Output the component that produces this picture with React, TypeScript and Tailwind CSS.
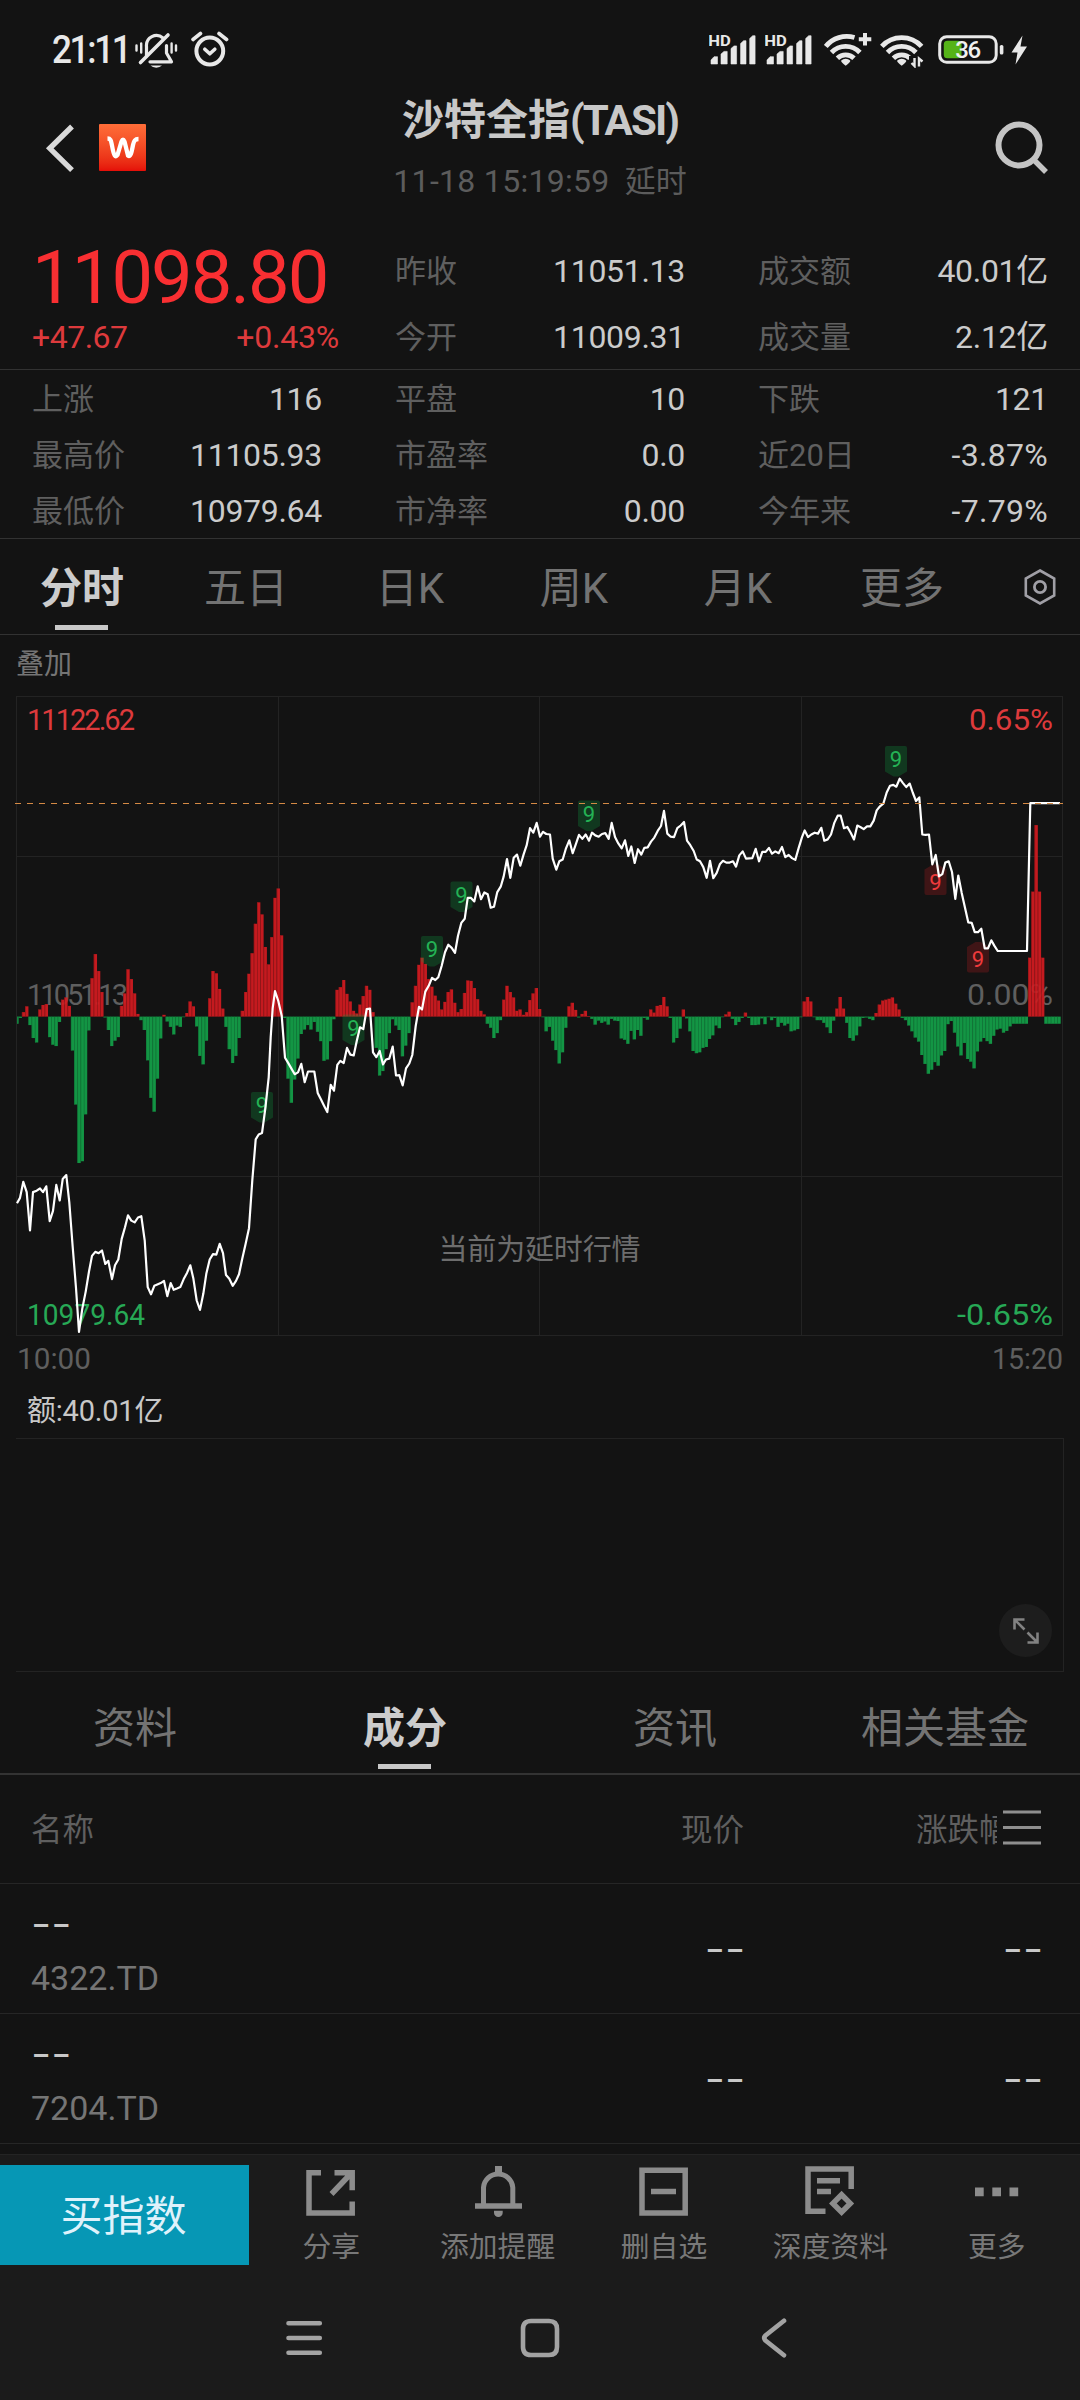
import React from "react";

const FONT = "font-['Roboto','Noto_Sans_CJK_SC',sans-serif]";

/* ---------- status bar ---------- */

function MutedBell() {
  return (
    <svg width="44" height="38" viewBox="0 0 44 38" fill="none" stroke="#e8e8e8" strokeWidth="3.2" strokeLinecap="round">
      <path d="M11.5 24V14.5a10 10 0 0 1 16.5-8.5" />
      <path d="M31.5 13.5V21l5 8.8H15" strokeLinejoin="round" />
      <path d="M5.5 30.5L33 3" strokeWidth="3.6" />
      <path d="M1.5 13.5v5M6.2 11.5v9M36.6 11.5v9M41 13.5v5" strokeWidth="2.4" />
      <path d="M15.5 33.5h11.5a7 5 0 0 1-11.5 0z" fill="#e8e8e8" stroke="none" />
    </svg>
  );
}

function AlarmClock() {
  return (
    <svg width="38" height="38" viewBox="0 0 38 38" fill="none" stroke="#e8e8e8" strokeLinecap="round">
      <circle cx="18.8" cy="20" r="13.4" strokeWidth="4" />
      <path d="M13.8 18.2l5 4.6 5-4.6" strokeWidth="3.6" strokeLinejoin="round" />
      <path d="M2 8.5L9.5 2.5M35.6 8.5L28 2.5" strokeWidth="3.6" />
    </svg>
  );
}

function Signal() {
  return (
    <svg width="47" height="36" viewBox="0 0 47 36" fill="#e8e8e8">
      <text x="-0.8" y="14" fontSize="14.5" fontWeight="700" textLength="22.5" lengthAdjust="spacingAndGlyphs">HD</text>
      <path d="M2 32v-4l3-3.3h3.5V32zM12 32V22l3-2.6h3.2V32zM22 32V16.500l3-2.600h2.600V32zM31.600 32V11.500l3-2.800h2.400V32zM40.700 32V6.500l3-2.800h2.400V32z" stroke="#e8e8e8" strokeWidth=".6" strokeLinejoin="round" />
    </svg>
  );
}

function Wifi({ plus }: { plus?: boolean }) {
  return (
    <svg width={plus ? 48 : 44} height="36" viewBox={plus ? "0 0 48 36" : "0 0 44 36"} fill="none" stroke="#e8e8e8" strokeWidth="4.8">
      <path d={plus ? "M1.800 14.400A27 27 0 0 1 30.500 5.500" : "M1.800 14.400A27 27 0 0 1 41.600 14.400"} />
      <path d="M7.500 20.500A19.500 19.500 0 0 1 35.900 20.500" />
      <path d="M13.400 26.200A11.800 11.800 0 0 1 30 26.200" />
      <path d="M17.200 28.500a6.500 6.500 0 0 1 9 0q.6 1.500-4.500 5.300q-5.100-3.800-4.500-5.300z" fill="#e8e8e8" stroke="none" />
      {plus ? (
        <path d="M41 1v12.500M34.800 7.200h12.500" strokeWidth="4" />
      ) : (
        <>
          <path d="M29 36V24h15v12z" fill="#131313" stroke="none" />
          <path d="M34.500 26v8l-3-3M39 34.500v-8l3.500 3" strokeWidth="2.400" />
        </>
      )}
    </svg>
  );
}

function Battery() {
  return (
    <svg width="66" height="36" viewBox="0 0 66 36">
      <rect x="1.700" y="4.700" width="56.500" height="25.600" rx="7" fill="none" stroke="#e8e8e8" strokeWidth="3" />
      <rect x="5.800" y="8.800" width="17.700" height="17.500" rx="3.500" fill="#55b318" />
      <rect x="61.800" y="13" width="3.600" height="9.500" rx="1.600" fill="#e8e8e8" />
      <text x="17.200" y="26.200" fontSize="24" fontWeight="500" fill="#f0f0f0" textLength="26">36</text>
    </svg>
  );
}

function StatusBar() {
  return (
    <div className="flex h-[98px] items-center pt-[2px] text-[#e8e8e8]">
      <div className="ml-[52px] w-[83px]">
        <div className="inline-block origin-left scale-x-[0.9] text-[39px] leading-none font-medium tracking-[-2.600px] whitespace-nowrap">21:11</div>
      </div>
      <div className="mt-[1px]"><MutedBell /></div>
      <div className="ml-[12px]"><AlarmClock /></div>
      <div className="ml-auto flex pr-[52px]">
        <Signal />
        <div className="ml-[9px]"><Signal /></div>
        <div className="ml-[12px]"><Wifi plus /></div>
        <div className="ml-[8px]"><Wifi /></div>
        <div className="ml-[14px]"><Battery /></div>
        <svg className="ml-[7px]" width="17" height="36" viewBox="0 0 17 36">
          <path d="M11.500 3.500L.500 20.500h6l-2 12L16 14.500H9.500z" fill="#e8e8e8" />
        </svg>
      </div>
    </div>
  );
}

/* ---------- header ---------- */

function Header() {
  return (
    <div className="flex h-[139px] items-start">
      <div className="flex w-[200px] pt-[26px] pl-[45px]">
        <svg width="32" height="50" viewBox="0 0 32 50">
          <path d="M27 2.500L4.800 24.300L27 46.200" fill="none" stroke="#d9d9d9" strokeWidth="5.400" />
        </svg>
        <div className="ml-[22px] flex h-[47px] w-[47px] items-center justify-center rounded-[1px] bg-linear-to-b from-[#ff6d38] to-[#e50d08]">
          <svg width="34" height="24" viewBox="0 0 34 24">
            <path d="M1.500 2.500C5 2.500 5 5 6 9.500C8 21 9.500 21.500 11.500 19L15.500 5.500Q17 2 18.500 5.500L22 19.500C24.500 21.500 25.500 17 27 9C28 4.500 29 3 32.500 3" fill="none" stroke="#fff" strokeWidth="4.300" />
          </svg>
        </div>
      </div>
      <div className="flex flex-1 flex-col items-center pt-[2px]">
        <div className="text-[42px] leading-[42px] font-bold whitespace-nowrap text-[#c8c8c8]">
          沙特全指<span className="tracking-[-1.900px]">(TASI)</span>
        </div>
        <div className="mt-[19px] flex h-[40px] items-center text-[32px] leading-none whitespace-nowrap text-[#5c5c5c]">
          <span className="tracking-[0.300px]">11-18 15:19:59</span>
          <span className="ml-[15px] text-[31px]">延时</span>
        </div>
      </div>
      <div className="w-[200px] pt-[22px] pl-[115px]">
        <svg width="56" height="58" viewBox="0 0 56 58" fill="none" stroke="#c4c4c4" strokeWidth="6">
          <circle cx="24" cy="25" r="20.500" />
          <path d="M38.500 39.500L51 52" strokeWidth="5.500" />
        </svg>
      </div>
    </div>
  );
}

/* ---------- quote figures ---------- */

function Stat({ label, value }: { label: string; value: string }) {
  return (
    <div className="flex items-center justify-between pt-[2px] leading-none">
      <span className="text-[31px] text-[#5f5f5f]">{label}</span>
      <span className={value.startsWith("-") ? "text-[32px] tracking-[0.300px] text-[#cbcbcb]" : "text-[32px] tracking-[-0.300px] text-[#cbcbcb]"}>{value}</span>
    </div>
  );
}

const DETAILS: [string, string][] = [
  ["上涨", "116"],
  ["平盘", "10"],
  ["下跌", "121"],
  ["最高价", "11105.93"],
  ["市盈率", "0.0"],
  ["近20日", "-3.87%"],
  ["最低价", "10979.64"],
  ["市净率", "0.00"],
  ["今年来", "-7.79%"],
];

function Quote() {
  return (
    <>
      <div className="grid h-[133px] grid-cols-3 gap-x-[73px] border-b border-[#323232] px-[32px]">
        <div className="flex flex-col">
          <div className="flex h-[80px] items-center pt-[2px] text-[74px] leading-none tracking-[-1.900px] text-[#f92f32]">11098.80</div>
          <div className="flex h-[40px] w-[307px] items-center justify-between text-[32px] leading-none text-[#dd3a3c]">
            <span className="tracking-[-0.500px]">+47.67</span>
            <span className="tracking-[-0.200px]">+0.43%</span>
          </div>
        </div>
        <div className="grid grid-rows-2">
          <Stat label="昨收" value="11051.13" />
          <Stat label="今开" value="11009.31" />
        </div>
        <div className="grid grid-rows-2">
          <Stat label="成交额" value="40.01亿" />
          <Stat label="成交量" value="2.12亿" />
        </div>
      </div>
      <div className="grid h-[169px] auto-rows-[56px] grid-cols-3 gap-x-[73px] border-b border-[#323232] px-[32px]">
        {DETAILS.map(([label, value]) => (
          <Stat key={label} label={label} value={value} />
        ))}
      </div>
    </>
  );
}

function PeriodTabs() {
  return (
    <div className="flex h-[96px] border-b border-[#323232] text-[42px] leading-[42px] text-[#737373]">
      {["分时", "五日", "日K", "周K", "月K", "更多"].map((name, i) => (
        <div key={name} className="flex w-[164px] flex-col items-center pt-[29px]">
          <span className={i === 0 ? "font-bold text-[#cccccc]" : ""}>{name}</span>
          {i === 0 && <span className="mt-[15px] -ml-[1px] h-[5px] w-[53px] bg-[#c8c8c8]" />}
        </div>
      ))}
      <div className="pt-[29px] pl-[39px]">
        <svg width="34" height="38" viewBox="0 0 34 38" fill="none" stroke="#a09fa6" strokeWidth="2.600">
          <path d="M17 2.500L31.200 10.500V27.500L17 35.500L2.800 27.500V10.500z" />
          <circle cx="17" cy="19" r="5.600" strokeWidth="2.800" />
        </svg>
      </div>
    </div>
  );
}

/* ---------- intraday chart ---------- */

/* Price trace and bars share one 3240 x 1568 plotting space. */
const KX = 1 / 3;
const KY = 1 / 2.24;
const TOP = 680;
const ZERO = 754;

const PRICE: [number, number, string][] = [
  [0, 0, "51,1172 60,1160 70,1124 80,1147 90,1233 99,1147 110,1144 120,1139 129,1147 139,1134 149,1212 159,1189 169,1131 179,1166 188,1118 199,1109 208,1170 218,1270 228,1362 237,1460 247,1408 257,1370 267,1325 276,1290 286,1281 296,1284 306,1278 316,1308 325,1301 336,1342 345,1311 355,1298 365,1252 375,1226 384,1199 394,1211 404,1215 414,1204 424,1201 434,1255 443,1360 453,1376 463,1357 472,1354 482,1351 492,1346 502,1380 512,1351 521,1366 531,1363 541,1360 551,1342 561,1328 571,1311 580,1340 590,1390 600,1411 610,1375 619,1330 629,1298 639,1286 649,1287 659,1263 669,1284 678,1333 688,1341 698,1357 708,1346 717,1331 727,1296 737,1262 747,1228 757,1121 767,1029 776,1018 786,1015 796,960 806,890 812,800 818,735 825,697 835,719 845,752 855,846 864,857 874,870 884,883 894,879 904,860 914,901 924,877 943,877 953,925 963,940 973,955 982,968 992,907 1002,920 1012,862 1021,853 1031,858 1041,824 1051,839 1061,841 1070,809"],
  [1080, 0, "0,778 10,782 20,737 30,736 39,834 49,845 59,831 69,861 78,850 88,848 98,821 108,886 118,885 128,908 138,870 148,859 157,840 167,775 177,732 186,738 196,698 206,685 216,667 226,672 235,666 245,640 255,610 265,593 275,600 285,611 294,573 304,544 314,535 323,488 333,488 343,496 353,462 363,491 373,476 383,480 392,510 402,508 412,475 422,463 431,440 441,401 451,443 461,398 471,391 481,416 491,390 500,370 510,332 520,342 530,320 540,351 549,340 559,345 570,346 578,400 589,425 598,406 608,402 618,377 628,359 638,388 647,369 657,347 667,356 677,346 687,360 696,342 706,348 716,351 726,345 736,343 746,356 755,320 765,352 775,366 785,377 795,359 805,394 814,373 824,410 834,379 844,391 853,376 863,375 873,362 883,353 893,338 903,327 912,293 922,344 932,351 942,352 952,332 962,326 972,318 981,360 991,370 1001,383 1010,402 1020,406 1030,419 1040,443 1050,405 1060,444 1070,432"],
  [2160, 0, "0,412 9,405 19,409 29,409 39,406 48,418 58,393 68,384 78,400 97,399 107,378 117,406 127,385 137,385 147,376 156,389 166,384 176,388 186,374 196,397 206,392 216,399 226,403 236,376 246,352 254,337 264,352 274,346 284,342 294,344 304,331 313,360 323,357 333,346 343,320 353,304 362,304 372,332 382,329 392,342 402,357 412,326 422,330 431,334 441,328 451,328 461,315 470,292 480,283 490,277 500,252 510,237 520,235 529,239 539,221 549,231 559,240 569,232 578,252 588,271 598,263 607,346 617,347 627,346 637,413 647,392 657,440 667,435 676,409 686,406 696,430 706,490 715,438 725,477 735,510 745,543 755,544 764,565 774,565 784,557 794,601 804,601 814,583 823,595 833,607 921,607 931,276 1020,276"],
];

const LINE = PRICE.flatMap(([dx, dy, pts]) =>
  pts.split(" ").map((p) => {
    const [x, y] = p.split(",").map(Number);
    return `${((x + dx) * KX).toFixed(1)},${(TOP + (y + dy) * KY).toFixed(1)}`;
  }),
).join(" ");

/* One value per trading minute: above ZERO is drawn red, below it green. */
const BARS = [
  770, 757, 744, 731, 773, 802, 812, 738, 728, 726, 800, 817, 820, 766, 716, 711, 730, 830, 951, 1082, 1078, 973, 785, 668, 614, 652, 699, 756, 784, 820,
  808, 800, 730, 702, 648, 670, 702, 748, 762, 784, 852, 936, 967, 893, 803, 750, 765, 777, 794, 774, 777, 754, 746, 720, 731, 776, 842, 861, 808, 713,
  652, 657, 692, 736, 777, 827, 858, 842, 802, 741, 699, 658, 612, 546, 498, 525, 598, 637, 576, 488, 467, 572, 757, 893, 947, 895, 848, 793, 783, 773,
  783, 766, 788, 809, 853, 850, 809, 760, 694, 688, 672, 703, 720, 741, 747, 727, 708, 685, 694, 744, 824, 886, 876, 827, 791, 760, 774, 784, 843, 819,
  791, 722, 685, 638, 622, 636, 670, 687, 707, 718, 738, 721, 699, 693, 723, 744, 737, 701, 673, 674, 690, 715, 741, 749, 770, 779, 802, 791, 762, 716,
  685, 699, 711, 741, 738, 750, 744, 717, 702, 690, 737, 754, 787, 777, 808, 829, 859, 834, 779, 731, 723, 739, 756, 748, 741, 753, 759, 772, 763, 768,
  765, 772, 759, 763, 764, 803, 806, 815, 786, 805, 784, 797, 757, 761, 738, 745, 730, 728, 710, 731, 757, 812, 802, 781, 738, 758, 787, 831, 836, 834,
  824, 822, 804, 796, 774, 780, 754, 749, 743, 759, 773, 766, 757, 745, 757, 773, 773, 772, 758, 771, 754, 762, 757, 777, 768, 774, 770, 787, 785, 782,
  754, 720, 710, 720, 754, 762, 762, 768, 778, 791, 763, 736, 710, 736, 768, 802, 808, 796, 776, 757, 756, 759, 762, 746, 727, 718, 716, 714, 711, 725,
  738, 757, 762, 774, 787, 801, 810, 840, 860, 882, 873, 856, 864, 841, 831, 771, 764, 790, 821, 841, 813, 849, 855, 870, 832, 810, 802, 809, 815, 797,
  783, 781, 790, 786, 776, 770, 770, 770, 770, 770, 622, 474, 325, 474, 622, 770, 770, 770, 770, 770,
];

const GRID_X = [16.5, 278.5, 539.5, 801.5, 1062.5];
const GRID_Y = [696.5, 856.5, 1176.5, 1335.5];

const MARKS: [number, number, boolean][] = [
  [262, 1092, true],
  [353.5, 1014.5, true],
  [432, 936, true],
  [461.500, 881.500, true],
  [589, 800.500, true],
  [896, 746, true],
  [935.500, 864.500, false],
  [978, 942, false],
];

function Mark({ x, y, down }: { x: number; y: number; down: boolean }) {
  const color = down ? "#24b255" : "#ee3a3c";
  const d = down
    ? "M-9 0H9Q11 0 11 2V25.500L2.500 30.500H-2.500L-11 25.500V2Q-11 0 -9 0z"
    : "M-9 30.500H9Q11 30.500 11 28.500V5L2.500 0H-2.500L-11 5V28.500Q-11 30.500 -9 30.500z";
  return (
    <g transform={`translate(${x} ${y})`}>
      <path d={d} fill={down ? "#0f9a3f" : "#b51c20"} fillOpacity=".28" />
      <text x="0" y={down ? 21 : 25} textAnchor="middle" fontSize="22" fill={color}>9</text>
    </g>
  );
}

function IntradayChart() {
  return (
    <svg className="block" width="1080" height="690" viewBox="0 693 1080 690">
      <g stroke="#232323" strokeWidth="1">
        {GRID_Y.map((y) => (
          <path key={y} d={`M16 ${y}H1063`} />
        ))}
        {GRID_X.map((x) => (
          <path key={x} d={`M${x} 696V1336`} />
        ))}
      </g>
      <g fontSize="29">
        <text x="27" y="1005" fill="#5f5f5f" textLength="101" lengthAdjust="spacing">11051.13</text>
        <text x="1053" y="1005" fill="#5f5f5f" textAnchor="end" textLength="86" lengthAdjust="spacingAndGlyphs">0.00%</text>
        <text x="27" y="730" fill="#dd3a3c" textLength="108" lengthAdjust="spacing">11122.62</text>
        <text x="1053" y="730" fill="#dd3a3c" textAnchor="end" textLength="84" lengthAdjust="spacingAndGlyphs">0.65%</text>
        <text x="27" y="1325" fill="#27a956" textLength="118" lengthAdjust="spacingAndGlyphs">10979.64</text>
        <text x="1053" y="1325" fill="#27a956" textAnchor="end" textLength="96" lengthAdjust="spacingAndGlyphs">-0.65%</text>
        <text x="17" y="1368.500" fill="#5f5f5f" textLength="74" lengthAdjust="spacingAndGlyphs">10:00</text>
        <text x="1063" y="1368.500" fill="#5f5f5f" textAnchor="end" textLength="71" lengthAdjust="spacingAndGlyphs">15:20</text>
        <text x="539.500" y="1260" fill="#6d6d6d" textAnchor="middle" textLength="202">当前为延时行情</text>
      </g>
      <g fillOpacity=".93">
        {BARS.map((v, i) => {
          const left = Math.max(17, (51 + 9.8 * i - 4.9) * KX);
          const right = (51 + 9.8 * i + 4.9) * KX;
          const zero = TOP + ZERO * KY;
          const end = TOP + v * KY;
          const up = v < ZERO;
          return (
            <g key={i}>
              <rect x={left} y={Math.min(zero, end)} width={right - left} height={Math.max(0.6, Math.abs(end - zero))} fill={up ? "#d21b20" : "#139f48"} />
              <rect x={left} y={Math.min(zero, end)} width="0.6" height={Math.abs(end - zero)} fill={up ? "#8a1417" : "#107538"} />
            </g>
          );
        })}
      </g>
      {MARKS.map(([x, y, down]) => (
        <Mark key={x} x={x} y={y} down={down} />
      ))}
      <polyline points={LINE} fill="none" stroke="#ffffff" strokeWidth="2.2" strokeLinejoin="round" />
      <path d="M15 803.500H1063" stroke="#d58a45" strokeWidth="1" strokeDasharray="6 6" />
    </svg>
  );
}

function VolumePanel() {
  return (
    <>
      <div className="flex h-[55px] items-center pt-[2px] pl-[27px] text-[29px] leading-none tracking-[-0.200px] text-[#c8c8c8]">额:40.01亿</div>
      <div className="relative ml-[16px] h-[234px] w-[1048px] border-y border-r border-[#232323]">
        <div className="absolute top-[165px] right-[11px] flex h-[53px] w-[53px] items-center justify-center rounded-full bg-[#1d1d1d]">
          <svg width="28" height="28" viewBox="0 0 28 28" fill="none" stroke="#828282" strokeWidth="2.600">
            <path d="M2.500 12.500V2.500H12.500M2.500 2.500L12.500 12.500M25.500 15.500V25.500H15.500M25.500 25.500L15.500 15.500" />
          </svg>
        </div>
      </div>
    </>
  );
}

/* ---------- constituents ---------- */

function InfoTabs() {
  return (
    <div className="grid h-[103px] grid-cols-4 border-b-2 border-[#333333] text-[42px] leading-[42px] text-[#737373]">
      {["资料", "成分", "资讯", "相关基金"].map((name, i) => (
        <div key={name} className="flex flex-col items-center pt-[36px]">
          <span className={i === 1 ? "font-bold text-[#cccccc]" : ""}>{name}</span>
          {i === 1 && <span className="mt-[14px] -ml-[1px] h-[5px] w-[53px] bg-[#c8c8c8]" />}
        </div>
      ))}
    </div>
  );
}

function Dashes({ right }: { right?: boolean }) {
  return (
    <span
      className={
        right
          ? "inline-block origin-right scale-x-[1.220] font-['Inter'] text-[36px] leading-none text-[#c8c8c8]"
          : "inline-block origin-left scale-x-[1.220] self-start font-['Inter'] text-[36px] leading-none text-[#c8c8c8]"
      }
    >
      --
    </span>
  );
}

function Constituents() {
  return (
    <div className="pb-[10px]">
      <div className="flex h-[109px] items-center border-b border-[#262626] text-[31.500px] leading-none text-[#5f5f5f]">
        <span className="mt-[3px] ml-[31px]">名称</span>
        <span className="mt-[3px] ml-auto w-[63px] whitespace-nowrap">现价</span>
        <span className="mt-[3px] ml-[172px] w-[81px] overflow-hidden leading-[40px] whitespace-nowrap">涨跌幅</span>
        <svg className="mr-[39px] ml-[6px]" width="38" height="40" viewBox="0 0 38 40" stroke="#8f8f8f" strokeWidth="3">
          <path d="M0 3H38M0 18.500H38M0 34H38" />
        </svg>
      </div>
      {["4322.TD", "7204.TD"].map((code) => (
        <div key={code} className="flex h-[130px] items-center border-b border-[#262626] pr-[37px] pl-[31px]">
          <div className="flex flex-1 flex-col pt-[4px]">
            <Dashes />
            <span className="mt-[19px] text-[34px] leading-none text-[#757575]">{code}</span>
          </div>
          <div className="pt-[2px]">
            <Dashes right />
          </div>
          <div className="w-[298px] pt-[2px] text-right">
            <Dashes right />
          </div>
        </div>
      ))}
    </div>
  );
}

/* ---------- footer ---------- */

function ActionIcon({ children }: { children: React.ReactNode }) {
  return (
    <svg width="52" height="52" viewBox="0 0 52 52" fill="none" stroke="#8c8c8c" strokeWidth="5.500">
      {children}
    </svg>
  );
}

const ACTIONS: { label: string; icon: React.ReactNode }[] = [
  { label: "分享", icon: <path d="M16 6.700H4V47H47.200V35.500M29.500 6.700H47.200V24.300M46 7.500L26.500 28" /> },
  {
    label: "添加提醒",
    icon: (
      <>
        <path d="M11.700 38V21.500a14.700 14.700 0 0 1 29.300 0V38" transform="translate(-.2 0)" strokeWidth="5" />
        <path d="M3 40H50" strokeWidth="5.300" />
        <path d="M23 0h7v6h-7zM22 44.700h8.700v2a4.350 4.350 0 0 1-8.700 0z" fill="#8c8c8c" stroke="none" />
      </>
    ),
  },
  { label: "删自选", icon: <path d="M4 4.300H47.200V47H4zM13 25.500H38" /> },
  { label: "深度资料", icon: <path d="M21.500 45.300H4V3H47.200V23M13 14.800H36M13 25.500H27M37.600 28.700L46.300 37.400L37.600 46.100L28.900 37.400z" /> },
  { label: "更多", icon: <path d="M4 21.500h8.700v8.700h-8.700zM21.300 21.500h8.700v8.700h-8.700zM38.500 21.500h8.700v8.700h-8.700z" fill="#8c8c8c" stroke="none" /> },
];

function Footer() {
  return (
    <div className="h-[246px] border-t border-[#242424] bg-[#1b1b1b]">
      <div className="flex h-[120px] items-start">
        <div className="mt-[10px] flex h-[100px] w-[249px] items-center justify-center bg-[#0697b5] pt-[3px] pr-[2px] text-[42px] leading-none text-[#dff2fb]">买指数</div>
        <div className="-ml-[1px] grid flex-1 grid-cols-5 pt-[11px]">
          {ACTIONS.map(({ label, icon }) => (
            <div key={label} className="flex flex-col items-center">
              <ActionIcon>{icon}</ActionIcon>
              <span className="mt-[13px] text-[28.800px] leading-[32px] whitespace-nowrap text-[#787878]">{label}</span>
            </div>
          ))}
        </div>
      </div>
      <div className="flex h-[125px] items-center justify-center">
        {[
          "M5.500 7.300H36.800M5.500 22H36.800M5.500 36.700H36.800",
          "M13 5H31Q39 5 39 13V31Q39 39 31 39H13Q5 39 5 31V13Q5 5 13 5z",
          "M31 4.800L12.500 19.500Q10 22 12.500 24.500L31 39.200",
        ].map((d) => (
          <div key={d} className="flex w-[235px] justify-center">
            <svg width="44" height="44" viewBox="0 0 44 44" fill="none" stroke="#a3a3a3" strokeWidth="4.600" strokeLinecap="round">
              <path d={d} />
            </svg>
          </div>
        ))}
      </div>
    </div>
  );
}

export default function App() {
  return (
    <div className={`h-[2400px] w-[1080px] overflow-hidden bg-[#131313] ${FONT}`}>
      <StatusBar />
      <Header />
      <Quote />
      <PeriodTabs />
      <div className="flex h-[58px] items-center pt-[2px] pl-[16px] text-[28px] leading-none text-[#757575]">叠加</div>
      <IntradayChart />
      <VolumePanel />
      <InfoTabs />
      <Constituents />
      <Footer />
    </div>
  );
}
